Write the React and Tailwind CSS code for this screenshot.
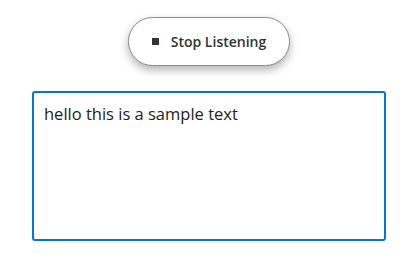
export default function App() {
  return (
    <div className="min-h-screen w-full bg-white flex flex-col items-center pt-[17px] font-['Open_Sans',sans-serif]">
      {/* Listening toggle */}
      <button className="flex items-center justify-center gap-3 h-[49px] w-[162px] rounded-full border border-[#8a8a8a] bg-white text-[14px] font-semibold text-[#333] shadow-[0_4px_8px_rgba(0,0,0,0.3)]">
        <span className="w-[7px] h-[7px] bg-[#333]" />
        Stop Listening
      </button>

      {/* Transcript */}
      <textarea
        defaultValue="hello this is a sample text"
        className="mt-[25px] w-[354px] h-[150px] resize-none rounded-[3px] border-2 border-[#0078d4] px-[10px] py-[9px] text-[16.5px] text-[#222] outline-none"
      />
    </div>
  );
}
